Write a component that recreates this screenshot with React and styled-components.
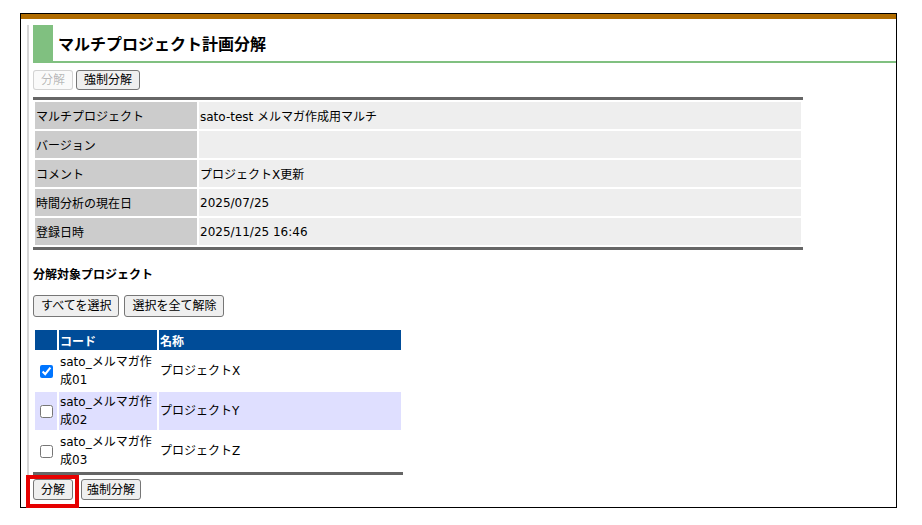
import React from "react";
import styled, { createGlobalStyle } from "styled-components";

const Global = createGlobalStyle`
  html, body { margin: 0; padding: 0; background: #fff; }
  body {
    font-family: "DejaVu Sans", "Noto Sans CJK JP", sans-serif;
    font-size: 12px;
    color: #000;
  }
  * { box-sizing: border-box; }
`;

const Page = styled.div`
  padding: 13px 0 0 20px;
`;

const Frame = styled.div`
  width: 877px;
  height: 495px;
  border: 1px solid #000;
  display: flex;
  flex-direction: column;
`;

const TopBar = styled.div`
  height: 5px;
  background: #b06c00;
  flex: none;
`;

const Content = styled.div`
  flex: 1;
  margin: 6px 0 0 6px;
  border-left: 2px solid #d6d6d6;
  padding-left: 4px;
  display: flex;
  flex-direction: column;
  align-items: flex-start;
`;

const Header = styled.h1`
  align-self: stretch;
  margin: 0;
  height: 38px;
  border-left: 20px solid #80c080;
  border-bottom: 2px solid #80c080;
  padding-left: 5px;
  display: flex;
  align-items: center;
  font-family: "DejaVu Sans", "Noto Sans CJK JP", sans-serif;
  font-size: 16px;
  font-weight: bold;
  color: #000;
`;

const ButtonBar = styled.div`
  display: flex;
  align-items: center;
  gap: ${(p) => p.$gap ?? 3}px;
  margin-top: ${(p) => p.$top}px;
`;

const Button = styled.button`
  height: ${(p) => p.$h ?? 20}px;
  padding: 0 ${(p) => p.$px ?? 7}px;
  border: 1px solid #767676;
  border-radius: 3px;
  background: #efefef;
  color: #000;
  font-family: "DejaVu Sans", "Noto Sans CJK JP", sans-serif;
  font-size: 12px;
  line-height: 1;
  white-space: nowrap;
  &:disabled {
    color: rgba(16, 16, 16, 0.3);
    border-color: rgba(118, 118, 118, 0.3);
    background: rgba(239, 239, 239, 0.3);
  }
`;

const InfoTable = styled.table`
  margin-top: 7px;
  width: 770px;
  border-collapse: separate;
  border-spacing: 2px;
  border-top: 3px solid #666;
  border-bottom: 3px solid #666;
`;

const LabelCell = styled.th`
  width: 162px;
  height: 27px;
  padding: 0 1px;
  background: #cccccc;
  text-align: left;
  font-weight: normal;
  vertical-align: middle;
`;

const ValueCell = styled.td`
  height: 27px;
  padding: 0 1px;
  background: #eeeeee;
  vertical-align: middle;
`;

const SectionTitle = styled.div`
  margin-top: 16px;
  line-height: 18px;
  font-weight: bold;
`;

const CodeTable = styled.table`
  margin-top: 11px;
  width: 370px;
  border-collapse: separate;
  border-spacing: 2px;
  border-bottom: 3px solid #666;
`;

const HeadCell = styled.th`
  height: 20px;
  padding: 0 1px;
  background: #004c98;
  color: #fff;
  text-align: left;
  font-weight: bold;
  width: ${(p) => (p.$w ? `${p.$w}px` : "auto")};
`;

const Row = styled.tr`
  background: ${(p) => (p.$alt ? "#dfdfff" : "transparent")};
`;

const Cell = styled.td`
  height: 38px;
  padding: 0 1px;
  line-height: 18px;
  vertical-align: middle;
  text-align: ${(p) => (p.$center ? "center" : "left")};
`;

const Check = styled.input`
  width: 13px;
  height: 13px;
  margin: 0 0 0 1px;
  vertical-align: middle;
`;

const Highlight = styled.span`
  position: relative;
  display: inline-flex;
`;

const HighlightBox = styled.span`
  position: absolute;
  left: -7px;
  top: -4px;
  width: 53px;
  height: 33px;
  border: 4px solid #e60000;
  pointer-events: none;
`;

const info = [
  ["マルチプロジェクト", "sato-test メルマガ作成用マルチ"],
  ["バージョン", ""],
  ["コメント", "プロジェクトX更新"],
  ["時間分析の現在日", "2025/07/25"],
  ["登録日時", "2025/11/25 16:46"],
];

const projects = [
  { code: "sato_メルマガ作成01", name: "プロジェクトX", checked: true },
  { code: "sato_メルマガ作成02", name: "プロジェクトY", checked: false },
  { code: "sato_メルマガ作成03", name: "プロジェクトZ", checked: false },
];

export default function App() {
  return (
    <>
      <Global />
      <Page>
        <Frame>
          <TopBar />
          <Content>
            <Header>マルチプロジェクト計画分解</Header>
            <ButtonBar $top={7}>
              <Button disabled>分解</Button>
              <Button>強制分解</Button>
            </ButtonBar>
            <InfoTable>
              <tbody>
                {info.map(([k, v]) => (
                  <tr key={k}>
                    <LabelCell>{k}</LabelCell>
                    <ValueCell>{v}</ValueCell>
                  </tr>
                ))}
              </tbody>
            </InfoTable>
            <SectionTitle>分解対象プロジェクト</SectionTitle>
            <ButtonBar $top={11} $gap={5}>
              <Button $h={22}>すべてを選択</Button>
              <Button $h={22}>選択を全て解除</Button>
            </ButtonBar>
            <CodeTable>
              <thead>
                <tr>
                  <HeadCell $w={22}></HeadCell>
                  <HeadCell $w={98}>コード</HeadCell>
                  <HeadCell>名称</HeadCell>
                </tr>
              </thead>
              <tbody>
                {projects.map((p, i) => (
                  <Row key={p.code} $alt={i === 1}>
                    <Cell $center>
                      <Check type="checkbox" defaultChecked={p.checked} />
                    </Cell>
                    <Cell>{p.code}</Cell>
                    <Cell>{p.name}</Cell>
                  </Row>
                ))}
              </tbody>
            </CodeTable>
            <ButtonBar $top={4} $gap={8}>
              <Highlight>
                <Button $h={21}>分解</Button>
                <HighlightBox />
              </Highlight>
              <Button $h={21} $px={5}>強制分解</Button>
            </ButtonBar>
          </Content>
        </Frame>
      </Page>
    </>
  );
}
